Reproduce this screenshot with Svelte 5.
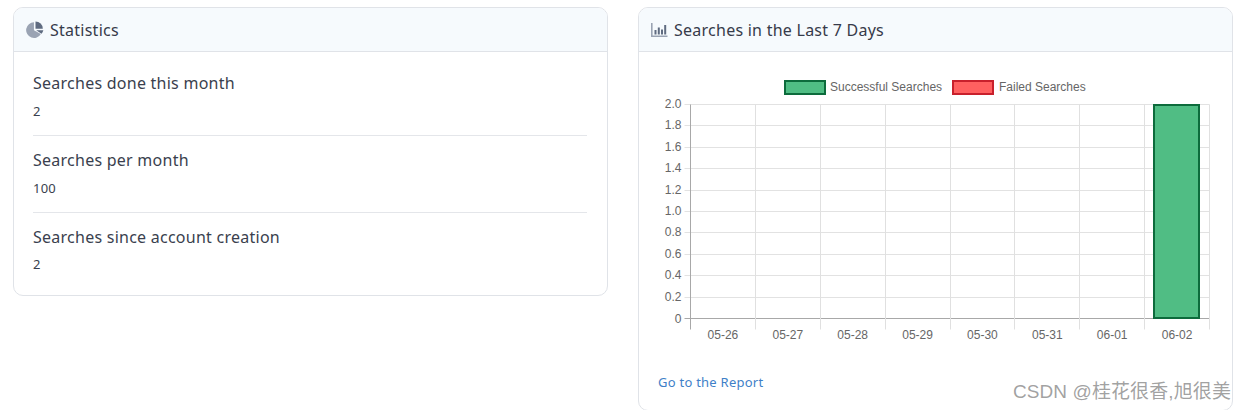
<script>
  const labels = ['05-26','05-27','05-28','05-29','05-30','05-31','06-01','06-02'];
  const ticks = ['2.0','1.8','1.6','1.4','1.2','1.0','0.8','0.6','0.4','0.2','0'];
  const left = 51.5, right = 570.5, top = 52.5, bottom = 266.5;
  const stepX = (right - left) / 8;
  const stepY = (bottom - top) / 10;
  const vlines = Array.from({ length: 9 }, (_, i) => Math.round(left + i * stepX - 0.5) + 0.5);
  const stats = [
    ['Searches done this month', '2'],
    ['Searches per month', '100'],
    ['Searches since account creation', '2']
  ];
</script>

<div class="page">
  <section class="card left">
    <header class="head">
      <svg class="ico" width="18" height="17" viewBox="0 0 17 16" aria-hidden="true">
        <path d="M7.5 1.2A7.4 7.4 0 1 0 14 12.2L7.5 8.6z" fill="#9aa3b3"/>
        <path d="M9 0.4A7 7 0 0 1 15.9 7.2H9z" fill="#5f6b80"/>
        <path d="M9.6 8.6H16.4A7 7 0 0 1 14.7 11.9z" fill="#5f6b80"/>
      </svg>
      <span>Statistics</span>
    </header>
    <div class="body">
      {#each stats as [label, value], i}
        <div class="stat" class:first={i === 0} class:last={i === 2}>
          <h4>{label}</h4>
          <p>{value}</p>
        </div>
      {/each}
    </div>
  </section>

  <section class="card right">
    <header class="head">
      <svg class="ico" width="17" height="14" viewBox="0 0 17 14" aria-hidden="true">
        <path d="M0.8 0V13.2H16.5" fill="none" stroke="#9aa3b3" stroke-width="1.6"/>
        <path d="M4.5 7V11.5M7.8 4.5V11.5M11 6.5V11.5M14.2 2V11.5" fill="none" stroke="#5f6b80" stroke-width="2"/>
      </svg>
      <span>Searches in the Last 7 Days</span>
    </header>
    <div class="chartbody">
      <svg class="chart" width="594" height="290" viewBox="0 0 594 290">
        <rect x="146" y="29" width="40" height="13" fill="#50bd84" stroke="#0d6b3c" stroke-width="2"/>
        <text x="191" y="39" class="legend">Successful Searches</text>
        <rect x="314" y="29" width="40" height="13" fill="#ff6060" stroke="#c8202c" stroke-width="2"/>
        <text x="360" y="39" class="legend">Failed Searches</text>

        {#each ticks as t, i}
          {@const y = Math.round(top + i * stepY - 0.5) + 0.5}
          <line x1={left - 6} x2={right} y1={y} y2={y} stroke={i === 10 ? '#a8a8a8' : '#e2e2e2'}/>
          <text x={left - 9} y={y + (i === 10 ? 4 : 3)} text-anchor="end" class="tick">{t}</text>
        {/each}
        {#each vlines as x, i}
          <line x1={x} x2={x} y1={top} y2={bottom + 11} stroke={i === 0 ? '#a8a8a8' : '#e0e0e0'}/>
        {/each}
        {#each labels as l, i}
          <text x={left + stepX * (i + 0.5)} y="287" text-anchor="middle" class="tick">{l}</text>
        {/each}

        <rect x="515" y="53" width="45" height="213" fill="#50bd84" stroke="#0d6b3c" stroke-width="2"/>
      </svg>
      <a href="#report" class="report">Go to the Report</a>
    </div>
  </section>

  <div class="watermark">CSDN @桂花很香,旭很美</div>
</div>

<style>
  :global(body) {
    margin: 0;
    background: #fff;
  }
  .page {
    position: relative;
    width: 1246px;
    height: 410px;
    overflow: hidden;
    box-sizing: border-box;
    padding: 7px 13px 0;
    display: grid;
    grid-template-columns: 595px 595px;
    column-gap: 30px;
    align-items: start;
    font-family: "Noto Sans", "Open Sans", sans-serif;
    color: #3a3f4e;
  }
  .card {
    box-sizing: border-box;
    border: 1px solid #e0e3e8;
    border-radius: 10px;
    background: #fff;
    overflow: hidden;
  }
  .left { height: 289px; }
  .right { height: 404px; }
  .head {
    box-sizing: border-box;
    height: 44px;
    display: flex;
    align-items: center;
    gap: 6px;
    padding: 0 12px;
    background: #f6fafd;
    border-bottom: 1px solid #e0e3e8;
    font-size: 16px;
    letter-spacing: 0.25px;
    color: #363b4a;
  }
  .ico { flex: none; }
  .body { padding: 0 20px 0 19px; }
  .stat {
    box-sizing: border-box;
    height: 77px;
    padding-top: 12px;
    border-top: 1px solid #e4e6ea;
  }
  .stat.first {
    border-top: 0;
    height: 83px;
    padding-top: 19px;
  }
  h4 {
    margin: 0;
    font-size: 16px;
    font-weight: 400;
    line-height: 24px;
    letter-spacing: 0.25px;
    color: #3a3f4e;
  }
  p {
    margin: 7px 0 0;
    font-size: 13px;
    line-height: 18px;
    letter-spacing: 0.2px;
    color: #3a3f4e;
  }
  .last p { margin-top: 6px; }
  .chart { display: block; }
  .legend,
  .tick {
    font-family: "Liberation Sans", Arial, sans-serif;
    font-size: 12px;
    fill: #666;
  }
  .report {
    display: block;
    margin: 30px 0 0 19px;
    font-size: 13px;
    line-height: 20px;
    letter-spacing: 0.25px;
    color: #3f7fc8;
    text-decoration: none;
  }
  .watermark {
    position: absolute;
    right: 15px;
    top: 379px;
    font-family: "Liberation Sans", "Noto Sans CJK SC", sans-serif;
    font-size: 19px;
    line-height: 26px;
    letter-spacing: 0.1px;
    color: rgba(120, 120, 120, 0.7);
    white-space: nowrap;
  }
</style>
